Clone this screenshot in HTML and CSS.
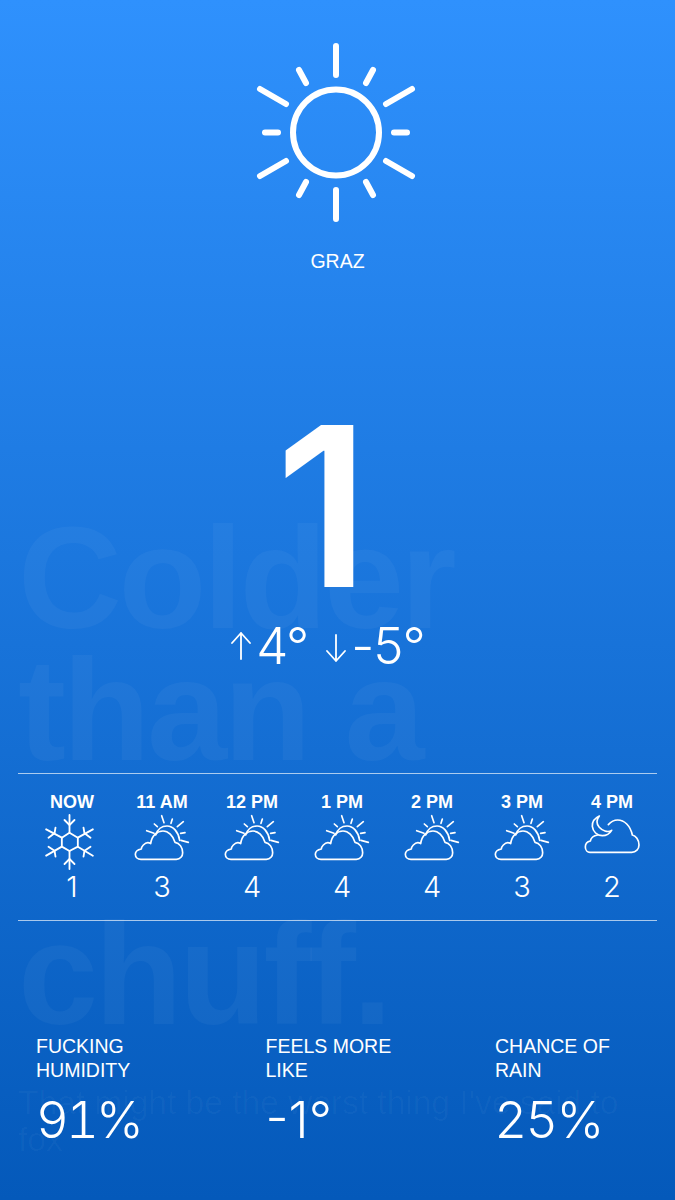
FILE: index.html
```html
<!DOCTYPE html>
<html lang="en">
<head>
    <meta charset="UTF-8">
    <meta name="viewport" content="width=device-width, initial-scale=1.0">
    <title>Graz weather</title>
    <link rel="stylesheet" href="styles.css">
</head>
<body>
    <svg class="icon-defs" width="0" height="0">
        <defs>
            <symbol id="partly" viewBox="-3 -3 171 141">
                <path d="M18 133H124C136 133 143 123 143 113 143 98 134 84 120 82 114 62 100 48 84 48 66 48 50 62 47 86 41 82 32 83 25 90 21 94 19 98 19 102 8 104 1 110 1 118 1 127 8 133 18 133Z"/>
                <path d="M62 60C68 42 82 33 96 33 114 33 130 50 134 76"/>
                <path d="M80 2L87 23M112 12L108 25M145 20L127 35M58 27L67 35M35 47L57 55M150 53L137 55M160 82L138 76"/>
            </symbol>
            <symbol id="moon" viewBox="-3 -3 171 120">
                <path d="M38 60C26 62 18 68 16 78 6 80 1 88 1 96 1 106 8 112 15 112H140C153 112 162 102 162 90 162 74 152 62 142 60 136 32 118 15 98 15 88 15 78 20 70 29"/>
                <path d="M43 3C28 10 21 22 22 34 24 50 36 62 52 62 64 62 74 56 80 46 74 50 66 50 60 48 46 44 36 32 36 20 36 14 39 8 43 3Z"/>
            </symbol>
            <symbol id="snow" viewBox="-3 -3 146 168">
                <path d="M70 53L95 68V95L70 108 47 95V68Z"/>
                <path d="M70 53V0M70 108V162M95 68L140 43M95 95L140 122M47 68L0 43M47 95L0 122"/>
                <path d="M55 15L70 30 85 15M55 147L70 132 85 147M112 38L115 55 133 68M112 125L115 107 133 95M28 38L25 55 7 68M28 125L25 107 7 95"/>
            </symbol>
        </defs>
    </svg>

    <div class="ghost">
        <p class="ghost-title">Colder<br>than a<br>&nbsp;<br>chuff.</p>
        <p class="ghost-sub">That might be the worst thing I've said to<br>fox</p>
    </div>

    <main class="page">
        <header class="hero">
            <svg class="sun" viewBox="0 0 164 180" width="164" height="180">
                <circle cx="80" cy="90.500" r="43"/>
                <path d="M80 4V33M80 148V177M4 47L30 62M156 47L130 62M4 134L30 119M156 134L130 119M43 28L50 41M117 28L110 41M43 153L50 140M117 153L110 140M9 90.500H22M138 90.500H151"/>
            </svg>
            <div class="city">GRAZ</div>
        </header>

        <section class="now">
            <div class="temp">1</div>
            <div class="range">
                <svg class="arrow" viewBox="0 0 20 28" width="20" height="28"><path d="M10 27V1M1 11L10 1 19 11"/></svg>
                <span>4°</span>
                <svg class="arrow arrow-down" viewBox="0 0 20 28" width="20" height="28"><path d="M10 1V27M1 17L10 27 19 17"/></svg>
                <span>-5°</span>
            </div>
        </section>

        <section class="hours">
            <div class="hour">
                <div class="hour-label">NOW</div>
                <svg class="hour-icon snow"><use href="#snow"/></svg>
                <div class="hour-temp">1</div>
            </div>
            <div class="hour">
                <div class="hour-label">11 AM</div>
                <svg class="hour-icon"><use href="#partly"/></svg>
                <div class="hour-temp">3</div>
            </div>
            <div class="hour">
                <div class="hour-label">12 PM</div>
                <svg class="hour-icon"><use href="#partly"/></svg>
                <div class="hour-temp">4</div>
            </div>
            <div class="hour">
                <div class="hour-label">1 PM</div>
                <svg class="hour-icon"><use href="#partly"/></svg>
                <div class="hour-temp">4</div>
            </div>
            <div class="hour">
                <div class="hour-label">2 PM</div>
                <svg class="hour-icon"><use href="#partly"/></svg>
                <div class="hour-temp">4</div>
            </div>
            <div class="hour">
                <div class="hour-label">3 PM</div>
                <svg class="hour-icon"><use href="#partly"/></svg>
                <div class="hour-temp">3</div>
            </div>
            <div class="hour">
                <div class="hour-label">4 PM</div>
                <svg class="hour-icon moon"><use href="#moon"/></svg>
                <div class="hour-temp">2</div>
            </div>
        </section>

        <section class="stats">
            <div class="stat">
                <div class="stat-label">FUCKING<br>HUMIDITY</div>
                <div class="stat-value stat-value-wide">91%</div>
            </div>
            <div class="stat">
                <div class="stat-label">FEELS MORE<br>LIKE</div>
                <div class="stat-value">-1°</div>
            </div>
            <div class="stat">
                <div class="stat-label">CHANCE OF<br>RAIN</div>
                <div class="stat-value">25%</div>
            </div>
        </section>
    </main>
</body>
</html>
```

FILE: styles.css
```css
html, body {
    margin: 0;
    padding: 0;
}

body {
    position: relative;
    width: 675px;
    height: 1200px;
    overflow: hidden;
    font-family: "Liberation Sans", Arial, sans-serif;
    color: #fff;
    background: linear-gradient(to bottom, #2f91fd, #0459ba);
}

.icon-defs {
    position: absolute;
}

/* big faint copy sitting behind everything */
.ghost {
    position: absolute;
    top: 0;
    left: 18px;
    right: 0;
    color: rgba(255, 255, 255, 0.04);
}

.ghost-title {
    margin: 0;
    padding-top: 513px;
    font-size: 144px;
    line-height: 132px;
    font-weight: bold;
    letter-spacing: -3.500px;
}

.ghost-sub {
    margin: 43px 0 0;
    font-size: 33.500px;
    line-height: 37px;
    white-space: nowrap;
    color: rgba(255, 255, 255, 0.03);
}

.page {
    position: relative;
}

.hero {
    display: flex;
    flex-direction: column;
    align-items: center;
    padding-top: 42px;
}

.sun {
    display: block;
    fill: none;
    stroke: #fff;
    stroke-width: 6;
    stroke-linecap: round;
}

.city {
    margin-top: 27px;
    font-size: 19.500px;
    line-height: 24px;
}

.now {
    display: flex;
    flex-direction: column;
    align-items: center;
    margin-top: 124px;
}

.temp {
    margin-right: 30px;
    font-family: Inter, "Liberation Sans", sans-serif;
    font-size: 222px;
    line-height: 220px;
    font-weight: 600;
}

.range {
    display: flex;
    align-items: center;
    justify-content: center;
    margin-top: 1px;
    padding-right: 19px;
    font-family: Inter, "Liberation Sans", sans-serif;
    font-weight: 300;
    font-size: 51px;
    line-height: 56px;
    letter-spacing: -1px;
}

.arrow {
    display: block;
    margin-right: 5px;
    fill: none;
    stroke: #fff;
    stroke-width: 1.800;
    stroke-linecap: round;
    stroke-linejoin: round;
}

.arrow-down {
    margin-left: 18px;
    margin-top: 3px;
}

.hours {
    display: grid;
    grid-template-columns: repeat(7, 90px);
    margin: 99px 18px 0;
    padding: 18px 0 17px 9px;
    border-top: 1px solid rgba(255, 255, 255, 0.65);
    border-bottom: 1px solid rgba(255, 255, 255, 0.65);
}

.hour {
    height: 111px;
    display: flex;
    flex-direction: column;
    align-items: center;
}

.hour-label {
    font-size: 18px;
    line-height: 20px;
    font-weight: bold;
}

.hour-icon {
    display: block;
    width: 57px;
    height: 47px;
    margin-top: 2px;
    fill: none;
    stroke: #fff;
    stroke-width: 5;
    stroke-linecap: round;
    stroke-linejoin: round;
}

.hour-icon.snow {
    width: 49px;
    height: 56px;
    margin-left: -6px;
    stroke-width: 5.500;
}

.hour-icon.moon {
    height: 40px;
}

.hour-temp {
    margin-top: auto;
    font-family: Inter, "Liberation Sans", sans-serif;
    font-weight: 300;
    font-size: 29px;
    line-height: 32px;
}

.stats {
    display: grid;
    grid-template-columns: 229.500px 229.500px 1fr;
    margin: 113px 0 0 36px;
}

.stat-label {
    font-size: 19.500px;
    line-height: 24px;
}

.stat-value {
    margin-top: 10px;
    font-family: Inter, "Liberation Sans", sans-serif;
    font-weight: 300;
    font-size: 51px;
    line-height: 56px;
}

.stat-value-wide {
    font-variant-numeric: tabular-nums;
    letter-spacing: -3px;
}
```
